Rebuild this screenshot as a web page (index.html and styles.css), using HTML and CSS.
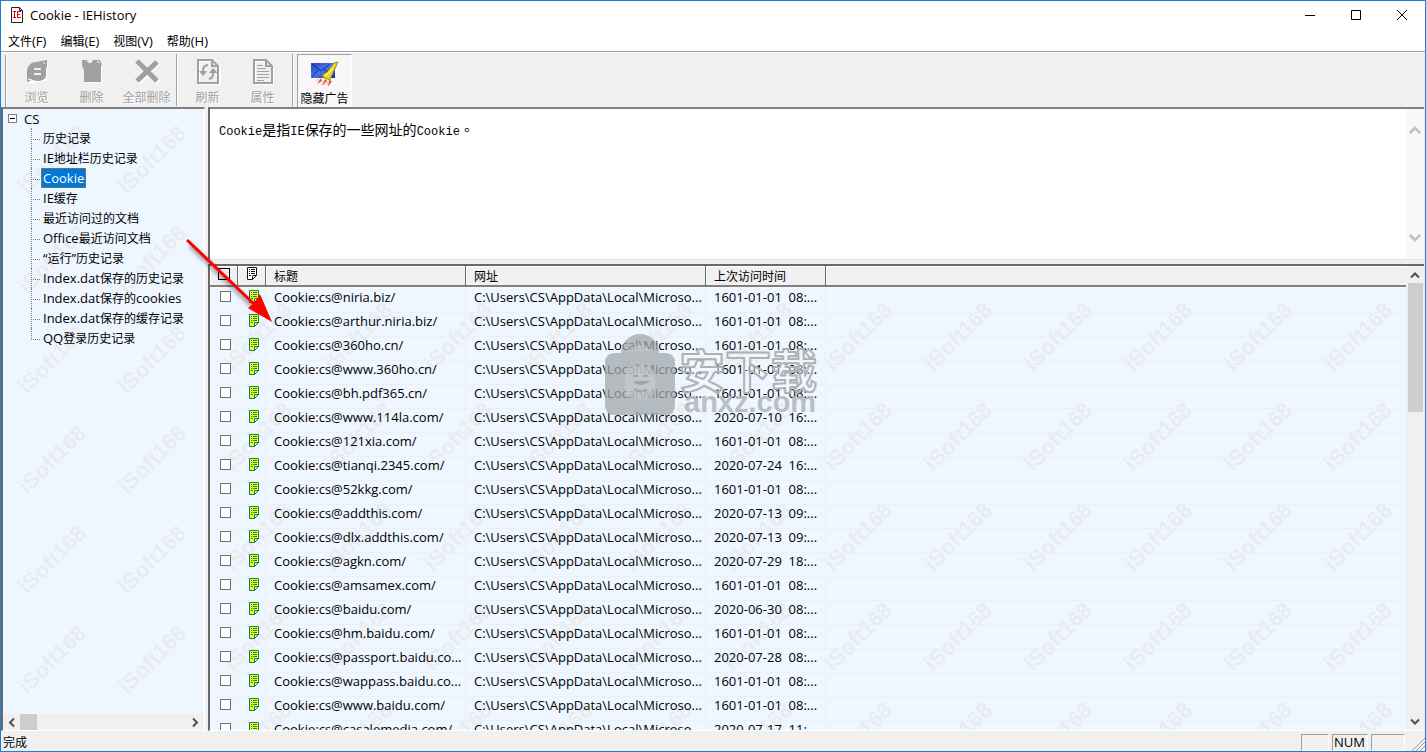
FILE: index.html
```
<!DOCTYPE html>
<html lang="zh-CN">
<head>
<meta charset="utf-8">
<title>Cookie - IEHistory</title>
<link rel="stylesheet" href="styles.css">
</head>
<body>
<svg class="defs" aria-hidden="true">
  <symbol id="note" viewBox="0 0 10 13"><path d="M.5.5h9v8l-4 4h-5z" class="note-fill"/><path d="M9.500 8.500h-4v4M2 2.500h1M4 2.500h4M2 4.500h1M4 4.500h4M2 6.500h1M4 6.500h4M2 8.500h2" class="note-line"/></symbol>
  <symbol id="up" viewBox="0 0 10 7"><path d="M1 5.500l4-4 4 4"/></symbol>
</svg>
<div class="window">
  <header class="titlebar">
    <svg class="appicon" viewBox="0 0 12 16"><path d="M.5.500h8l3 3v12H.5z" fill="#fff" stroke="#222"/><path d="M8.500.500v3h3" fill="none" stroke="#222"/><path d="M3.500 4v7M2 4.500h3M2 10.500h3M6.500 4v7M6 4.500h4M6 7.500h3M6 10.500h4" stroke="#e00" fill="none"/></svg>
    <h1 class="title">Cookie - IEHistory</h1>
    <div class="controls">
      <button aria-label="最小化"><svg viewBox="0 0 12 12"><path d="M1 6.500h10"/></svg></button>
      <button aria-label="最大化"><svg viewBox="0 0 12 12"><path d="M1.500 1.500h9v9h-9z"/></svg></button>
      <button aria-label="关闭"><svg viewBox="0 0 12 12"><path d="M1 1l10 10M11 1L1 11"/></svg></button>
    </div>
  </header>
  <nav class="menubar">
    <button>文件<span class="lat">(F)</span></button>
    <button>编辑<span class="lat">(E)</span></button>
    <button>视图<span class="lat">(V)</span></button>
    <button>帮助<span class="lat">(H)</span></button>
  </nav>
  <div class="toolbar">
    <span class="rule"></span>
    <button class="tool off"><svg viewBox="0 0 28 28"><path fill="#fff" d="M5 20C4 12 7 7 14 6l5 0 5-2 1 3-2 3v8c0 4-4 6-9 6l-4 1-4 1-1-3z" transform="translate(1 1)"/><path fill="#a0a0a0" d="M4 19C3 10 7 5 13 5l5-1 6-1v6l-1 3v6c0 4-4 6-9 6l-5-1-5 2z"/><path fill="none" stroke="#f0f0f0" stroke-width="2" d="M11 12h7M11 17h7"/><path stroke="#fff" fill="none" d="M5 22l4 1M20 5l2 2"/></svg><span>浏览</span></button>
    <button class="tool off"><svg viewBox="0 0 28 28"><path fill="#fff" d="M5 4h6l3 2 3-3h6l2 4-1 3v16H7V14l-2-4z"/><path fill="#a0a0a0" d="M4 3h5l4 3 2-3h7l2 4-1 3v15H6V13l-2-4z"/><path d="M9 4l3 2 2-2M19 4l3 2" stroke="#fff" fill="none"/></svg><span>删除</span></button>
    <button class="tool off"><svg viewBox="0 0 28 28"><path stroke="#fff" stroke-width="5" d="M5 6l21 19M25 6L5 26"/><path stroke="#a0a0a0" stroke-width="5" d="M4 4l20 20M24 5L4 24"/></svg><span>全部删除</span></button>
    <span class="rule"></span>
    <button class="tool off"><svg viewBox="0 0 28 28"><path fill="none" stroke="#fff" stroke-width="2" d="M5 4h15l6 6v17H5z"/><path fill="none" stroke="#a0a0a0" stroke-width="2" d="M4 3h14l6 6v17H4zM18 3v6h6M9 17v-4q0-4 5-5M19 13v4q0 4-4 5"/><path fill="#a0a0a0" d="M5 14h8l-4 5zM15 16l4-5 5 5z"/></svg><span>刷新</span></button>
    <button class="tool off"><svg viewBox="0 0 28 28"><path fill="none" stroke="#fff" stroke-width="2" d="M6 4h13l5 5v18H6z"/><path fill="none" stroke="#a0a0a0" stroke-width="2" d="M5 3h12l6 6v17H5zM17 3v6h6"/><path stroke="#a0a0a0" fill="none" d="M8 8.500h6M8 11.500h9M8 14.500h12M8 17.500h12M8 20.500h12M8 23.500h7"/></svg><span>属性</span></button>
    <span class="rule wide"></span>
    <button class="tool active" aria-pressed="true"><svg viewBox="0 0 28 28"><defs><linearGradient id="blue" x1="0" y1="0" x2="1" y2="1"><stop offset="0" stop-color="#2445c8"/><stop offset=".5" stop-color="#4b74ea"/><stop offset="1" stop-color="#1229a0"/></linearGradient></defs><path fill="url(#blue)" d="M0 5h24v15H0z"/><path d="M1 6l9 7 9-7M1 19l7-8M22 19l-9-8" fill="none" stroke="#172a83"/><path fill="#e8d020" stroke="#7d7208" stroke-width=".7" d="M27 4l-4 1-7 9-5 3 2 3 6 2 3-7z"/><path fill="#fff799" d="M24 6l-6 8-4 3 1 1 5-4z"/><path fill="#dd5540" d="M10 20l-4 6 5-3zM14 21l-3 7 5-5zM18 22l-1 7 4-6z"/><path fill="#f3c4b4" d="M8 20l-4 4 4-2zM13 22l-4 5 4-2zM17 23l-3 5 3-2z"/></svg><span>隐藏广告</span></button>
  </div>
  <main class="content">
    <aside class="side">
      <div class="tree-area">
        <svg class="mark" aria-hidden="true"><defs><pattern id="m1" width="100" height="100" patternUnits="userSpaceOnUse" x="3" y="-5"><text x="21" y="91" transform="rotate(-45 21 91)">iSoft168</text></pattern></defs><rect width="100%" height="100%" fill="url(#m1)"/></svg>
        <div class="tree">
          <div class="root"><button class="toggle" aria-label="折叠"></button><span class="lat">CS</span></div>
          <ul>
            <li><a href="#">历史记录</a></li>
            <li><a href="#"><span class="lat">IE</span>地址栏历史记录</a></li>
            <li><a href="#" class="selected"><span class="lat">Cookie</span></a></li>
            <li><a href="#"><span class="lat">IE</span>缓存</a></li>
            <li><a href="#">最近访问过的文档</a></li>
            <li><a href="#"><span class="lat">Office</span>最近访问文档</a></li>
            <li><a href="#"><span class="lat">“</span>运行<span class="lat">”</span>历史记录</a></li>
            <li><a href="#"><span class="lat">Index.dat</span>保存的历史记录</a></li>
            <li><a href="#"><span class="lat">Index.dat</span>保存的<span class="lat">cookies</span></a></li>
            <li><a href="#"><span class="lat">Index.dat</span>保存的缓存记录</a></li>
            <li><a href="#"><span class="lat">QQ</span>登录历史记录</a></li>
          </ul>
        </div>
      </div>
      <div class="hscroll"><svg class="arrow to-left"><use href="#up"/></svg><span class="thumb"></span><svg class="arrow to-right"><use href="#up"/></svg></div>
    </aside>
    <div class="panes">
      <section class="info"><p>Cookie<span>是指</span>IE<span>保存的一些网址的</span>Cookie<span class="stop">。</span></p>
        <div class="vscroll pale"><svg class="arrow"><use href="#up"/></svg><svg class="arrow down"><use href="#up"/></svg></div>
      </section>
      <section class="list">
        <div class="grid">
          <svg class="mark" aria-hidden="true"><defs><pattern id="m2" width="100" height="100" patternUnits="userSpaceOnUse" x="1" y="-2"><text x="22" y="8" transform="rotate(-45 22 8)">iSoft168</text><text x="22" y="108" transform="rotate(-45 22 108)">iSoft168</text></pattern></defs><rect width="100%" height="100%" fill="url(#m2)"/></svg>
          <table>
            <colgroup><col class="c-check"><col class="c-icon"><col class="c-title"><col class="c-url"><col class="c-time"><col></colgroup>
            <thead><tr><th><input type="checkbox" aria-label="全选"></th><th><svg class="note mono"><use href="#note"/></svg></th><th>标题</th><th>网址</th><th>上次访问时间</th><th></th></tr></thead>
            <tbody id="rows"></tbody>
          </table>
        </div>
        <div class="vscroll"><svg class="arrow"><use href="#up"/></svg><span class="thumb"></span><svg class="arrow down"><use href="#up"/></svg></div>
      </section>
    </div>
  </main>
  <footer class="status"><span class="state">完成</span><span class="cell"></span><span class="cell num">NUM</span><span class="cell"></span><svg class="size-grip" viewBox="0 0 14 14"><path d="M1 14L14 1M5 14l9-9M9 14l5-5"/></svg></footer>
  <svg class="pointer" viewBox="0 0 100 100" aria-hidden="true"><path class="shade" d="M8 11L76 77"/><path class="shaft" d="M5 6L72 70"/><path class="head" d="M90 88L66 74l6-5 6-9z"/></svg>
  <svg class="brand" viewBox="0 0 220 90" aria-hidden="true"><path class="bag" d="M21 22a19 19 0 0 1 38 0h6q10 0 10 10v42q0 10-10 10H15Q5 84 5 74V32q0-10 10-10z"/><path class="bag-light" d="M28 20q12-12 24 0zM25 46q0-11 15-11t15 11v12q0 10-15 10T25 58z"/><path class="bag-line" d="M33 45h5M43 45h5M34 51h13q-6 4-13 0M34 58q6 5 13 0"/><text x="79" y="57" class="cn">安下载</text><text x="84" y="81" class="en">anxz.com</text></svg>
</div>
<script src="app.js"></script>
</body>
</html>
```
FILE: app.js
```
const cookies = [
  ["niria.biz/", "1601-01-01 08"],
  ["arthur.niria.biz/", "1601-01-01 08"],
  ["360ho.cn/", "1601-01-01 08"],
  ["www.360ho.cn/", "1601-01-01 08"],
  ["bh.pdf365.cn/", "1601-01-01 08"],
  ["www.114la.com/", "2020-07-10 16"],
  ["121xia.com/", "1601-01-01 08"],
  ["tianqi.2345.com/", "2020-07-24 16"],
  ["52kkg.com/", "1601-01-01 08"],
  ["addthis.com/", "2020-07-13 09"],
  ["dlx.addthis.com/", "2020-07-13 09"],
  ["agkn.com/", "2020-07-29 18"],
  ["amsamex.com/", "1601-01-01 08"],
  ["baidu.com/", "2020-06-30 08"],
  ["hm.baidu.com/", "1601-01-01 08"],
  ["passport.baidu.co...", "2020-07-28 08"],
  ["wappass.baidu.co...", "1601-01-01 08"],
  ["www.baidu.com/", "1601-01-01 08"],
  ["casalemedia.com/", "2020-07-17 11"]
];

document.getElementById("rows").innerHTML = cookies.map(([site, time]) => {
  const title = "Cookie:cs@" + site;
  const stamp = time.replace(" ", "\u00a0 ") + ":...";
  return `<tr><td><input type="checkbox" aria-label="${title}"></td>` +
    `<td><svg class="note"><use href="#note"/></svg></td>` +
    `<td>${title}</td><td>C:\\Users\\CS\\AppData\\Local\\Microso...</td><td>${stamp}</td><td></td></tr>`;
}).join("");
```
FILE: styles.css
```
* { box-sizing: border-box; }
body { margin: 0; font: 12px/20px "Noto Sans CJK SC", sans-serif; color: #000; }
button { border: 0; padding: 0; background: none; font: inherit; color: inherit; }
.defs { display: none; }
.lat { font-family: "Open Sans", sans-serif; font-size: 13px; }

.window { position: relative; display: flex; flex-direction: column; height: 100vh; border: 1px solid #1a80d6; background: #f0f0f0; overflow: hidden; }

.titlebar { display: flex; align-items: center; height: 29px; padding: 0 0 2px 10px; background: #fff; flex: none; }
.appicon { width: 12px; height: 16px; }
.title { margin: 0 0 0 7px; font: 13px/20px "Open Sans", sans-serif; }
.controls { display: flex; margin-left: auto; }
.controls button { width: 46px; height: 26px; display: grid; place-items: center; }
.controls svg { width: 12px; height: 12px; fill: none; stroke: #000; }

.menubar { display: flex; gap: 14px; height: 22px; padding-left: 7px; background: #fff; border-bottom: 1px solid #a0a0a0; flex: none; }

.toolbar { display: flex; height: 55px; padding: 2px 4px 0; border-top: 1px solid #fff; flex: none; }
.rule { width: 2px; height: 52px; margin-right: 2px; border-left: 1px solid #a0a0a0; border-right: 1px solid #fff; }
.tool + .rule { margin-left: 2px; margin-top: -1px; }
.rule.wide { margin-right: 3px; }
.tool { display: flex; flex-direction: column; align-items: center; width: 55px; height: 53px; line-height: 18px; padding-top: 3px; margin: -1px 0 0; }
.tool svg { width: 28px; height: 28px; flex: none; }
.tool span { margin-top: 3px; white-space: nowrap; }
.off { color: #a0a0a0; text-shadow: 1px 1px #fff; }
.active { border-left: 1px solid #a0a0a0; border-top: 1px solid #a0a0a0; background: #f8f8f8; border-right: 1px solid #fff; }

.content { display: flex; flex: 1; min-height: 0; gap: 3px; padding-right: 1px; }
.side { display: flex; flex-direction: column; flex: none; width: 204px; border-left: 2px solid #696969; border-top: 2px solid #808080; border-right: 1px solid #fff; border-bottom: 1px solid #fff; background: #eef6ff; }
.tree-area { position: relative; flex: 1; overflow: hidden; }
.mark { position: absolute; inset: 0; width: 100%; height: 100%; }
.mark text { font: bold 22px "Liberation Sans", sans-serif; fill: #e8ecf0; }
.tree { position: relative; padding-left: 5px; }
.root { display: flex; align-items: center; gap: 7px; height: 19px; }
.toggle { width: 9px; height: 9px; border: 1px solid #808080; background: linear-gradient(#000, #000) center / 5px 1px no-repeat #fff; }
.tree ul { list-style: none; margin: 0 0 0 23px; padding: 0; }
.tree li { position: relative; height: 20px; padding-left: 10px; white-space: nowrap; }
.tree li::before { content: ""; position: absolute; left: 0; top: 0; width: 8px; height: 11px; border-left: 1px dotted #808080; border-bottom: 1px dotted #808080; }
.tree li:not(:last-child)::after { content: ""; position: absolute; left: 0; top: 11px; height: 9px; border-left: 1px dotted #808080; }
.tree a { display: inline-flex; align-items: center; height: 20px; padding: 0 2px; color: inherit; text-decoration: none; }
.tree a.selected { background: #0078d7; color: #fff; outline: 1px dotted #d07020; outline-offset: -1px; }

.hscroll { display: flex; align-items: center; height: 16px; background: #f0f0f0; padding: 0 4px; flex: none; }
.hscroll .thumb { width: 17px; height: 16px; margin-left: 3px; background: #cdcdcd; }
.arrow { width: 10px; height: 7px; fill: none; stroke: #505050; stroke-width: 2; flex: none; }
.to-left { transform: rotate(-90deg); }
.to-right { transform: rotate(90deg); margin-left: auto; }
.down { transform: rotate(180deg); margin-top: auto; }

.panes { display: flex; flex-direction: column; flex: 1; gap: 4px; min-width: 0; }
.info { display: flex; flex: none; height: 153px; border-left: 2px solid #696969; border-top: 2px solid #808080; border-bottom: 1px solid #e4e4e4; background: #fff; }
.info p { flex: 1; margin: 10px 0 0 9px; font: 12px/20px "Liberation Mono", monospace; }
.info p span { font-family: "Noto Sans CJK SC", sans-serif; font-size: 14px; }
.info p .stop { font-family: "Noto Sans CJK TC", sans-serif; }
.vscroll { display: flex; flex-direction: column; align-items: center; flex: none; width: 18px; padding: 6px 0 5px; background: #f0f0f0; }
.vscroll .thumb { width: 15px; height: 129px; margin-top: 4px; background: #cdcdcd; }
.pale { background: #f8f8f8; padding: 17px 0; }
.pale .arrow { stroke: #bfbfbf; width: 14px; height: 9px; }

.list { display: flex; flex: 1; min-height: 0; border-left: 2px solid #696969; border-top: 2px solid #696969; border-bottom: 1px solid #fff; }
.grid { position: relative; flex: 1; overflow: hidden; background: #eef6ff; }
table { position: relative; width: 100%; border-collapse: separate; border-spacing: 0; table-layout: fixed; }
.c-check, .c-icon { width: 28px; }
.c-title { width: 200px; }
.c-url { width: 240px; }
.c-time { width: 120px; }
th, td { padding: 0 0 0 8px; text-align: left; white-space: nowrap; overflow: hidden; }
th { height: 21px; line-height: 19px; font-weight: 400; background: #f0f0f0; border-right: 1px solid #696969; border-bottom: 2px solid #808080; box-shadow: inset 1px 1px #fff; vertical-align: top; }
td { height: 24px; font: 13px/17px "Open Sans", sans-serif; vertical-align: top; border-right: 1px solid #f0eff0; border-bottom: 1px solid #f0eff0; }
th:last-child, td:last-child { border-right: 0; }
tbody tr:first-child td { height: 26px; border-top: 2px solid #f8f8f8; }
input { display: block; appearance: none; width: 11px; height: 11px; margin: 2px 0 0 2px; border: 1px solid #707070; background: #fff; }
th input { width: 12px; height: 12px; border-color: #000; margin: 2px 0 0; background: transparent; }
.note { display: block; width: 10px; height: 13px; margin: 1px 0 0 3px; }
.note-fill { fill: #ff0; stroke: #008080; }
.note-line { fill: none; stroke: #008080; }
.mono { filter: grayscale(1) contrast(4); margin: 1px 0 0 1px; }

.status { display: flex; gap: 3px; height: 20px; flex: none; align-items: stretch; padding-left: 2px; }
.state { flex: 1; line-height: 22px; }
.cell { width: 28px; margin-top: 3px; border: 1px solid #a0a0a0; border-right-color: #fff; border-bottom-color: #fff; }
.cell:last-of-type { width: 34px; }
.cell.num { width: 36px; padding-left: 1px; font: 13px/15px "Open Sans", sans-serif; }
.size-grip { width: 14px; height: 14px; margin-left: 3px; align-self: flex-end; stroke: #a0a0a0; fill: none; }

.pointer { position: absolute; left: 181px; top: 233px; width: 100px; height: 100px; fill: none; }
.shaft { stroke: #f00; stroke-width: 3; }
.shade { stroke: #0006; stroke-width: 4; filter: blur(2px); }
.head { fill: #f00; }

.brand { position: absolute; left: 599px; top: 330px; width: 220px; height: 90px; fill: none; }
.bag { fill: #a2a8ac; fill-opacity: .75; }
.bag-light { fill: #ccd1d5; fill-opacity: .5; }
.bag-line { stroke: #a0a5aa; stroke-width: 2; }
.brand text { font-family: "Noto Sans CJK SC", sans-serif; font-weight: 700; stroke: #aeb2b5; stroke-width: 2; stroke-linejoin: round; }
.brand .cn { font-size: 46px; fill: #f4f9ff; fill-opacity: .4; }
.brand .en { font: 700 29px "Liberation Sans", sans-serif; fill: #b3b8bb; fill-opacity: .9; stroke: none; }
```
